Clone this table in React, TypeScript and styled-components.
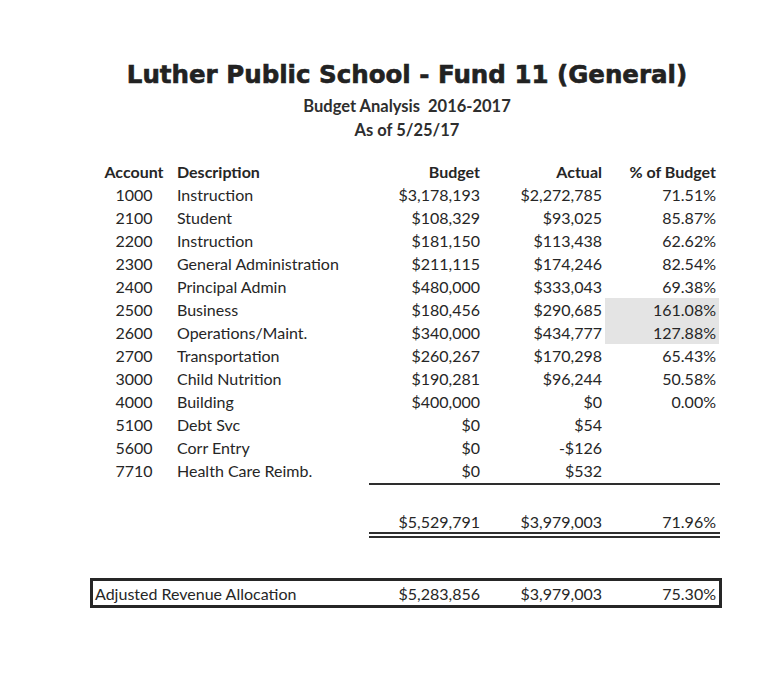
import React from 'react'
import styled, { createGlobalStyle } from 'styled-components'

const GlobalStyle = createGlobalStyle`
  html, body {
    margin: 0;
    padding: 0;
    background: #ffffff;
  }
  body {
    font-family: Lato, 'Open Sans', sans-serif;
    color: #262626;
  }
`

const Page = styled.div`
  width: 780px;
  height: 690px;
  padding-top: 61px;
  box-sizing: border-box;
  background: #fff;
`

const Heading = styled.div`
  margin-left: 34px;
  width: 746px;
  text-align: center;
`

const Title = styled.h1`
  margin: 0;
  font-family: 'DejaVu Sans', 'Liberation Sans', sans-serif;
  font-weight: 700;
  font-size: 24.5px;
  line-height: 28px;
  color: #222;
  -webkit-text-stroke: 0.6px #222;
`

const SubTitle = styled.div<{ first?: boolean }>`
  margin-top: ${({ first }) => (first ? '5px' : '0')};
  font-weight: 700;
  font-size: 16.5px;
  line-height: 24px;
  color: #2e2e2e;
  white-space: pre;
`

const Table = styled.div`
  margin-top: 18px;
  margin-left: 100px;
  width: 620px;
`

const Row = styled.div<{ head?: boolean }>`
  display: grid;
  grid-template-columns: 68px 203px 112px 122px 114px;
  height: 23px;
  align-items: stretch;
  font-size: 16px;
  font-weight: ${({ head }) => (head ? 700 : 400)};
`

const Cell = styled.div<{ align?: 'left' | 'center' | 'right'; shaded?: boolean }>`
  display: flex;
  align-items: center;
  justify-content: ${({ align }) =>
    align === 'center' ? 'center' : align === 'right' ? 'flex-end' : 'flex-start'};
  padding: ${({ align }) => (align === 'right' ? '0 3px 0 0' : align === 'left' ? '0 0 0 9px' : '0')};
  background: ${({ shaded }) => (shaded ? '#e4e4e4' : 'transparent')};
  white-space: nowrap;
`

const Rule = styled.div`
  margin-left: 269px;
  width: 351px;
  height: 2px;
  margin-top: 1px;
  background: #2e2e2e;
`

const TotalRow = styled(Row)`
  height: 21px;
  margin-top: 26px;
`

const DoubleRule = styled.div`
  margin-left: 269px;
  width: 351px;
  border-top: 6px double #2e2e2e;
`

const AdjustedBox = styled.div`
  margin-top: 40px;
  margin-left: 90px;
  width: 632px;
  height: 30px;
  box-sizing: border-box;
  border: 3px solid #262626;
  display: grid;
  grid-template-columns: 278px 112px 122px 114px;
  font-size: 16px;
`

const BoxLabel = styled.div`
  display: flex;
  align-items: center;
  padding-left: 2px;
  white-space: nowrap;
`

type Line = {
  acct: string
  desc: string
  budget: string
  actual: string
  pct: string
  over?: boolean
}

const lines: Line[] = [
  { acct: '1000', desc: 'Instruction', budget: '$3,178,193', actual: '$2,272,785', pct: '71.51%' },
  { acct: '2100', desc: 'Student', budget: '$108,329', actual: '$93,025', pct: '85.87%' },
  { acct: '2200', desc: 'Instruction', budget: '$181,150', actual: '$113,438', pct: '62.62%' },
  { acct: '2300', desc: 'General Administration', budget: '$211,115', actual: '$174,246', pct: '82.54%' },
  { acct: '2400', desc: 'Principal Admin', budget: '$480,000', actual: '$333,043', pct: '69.38%' },
  { acct: '2500', desc: 'Business', budget: '$180,456', actual: '$290,685', pct: '161.08%', over: true },
  { acct: '2600', desc: 'Operations/Maint.', budget: '$340,000', actual: '$434,777', pct: '127.88%', over: true },
  { acct: '2700', desc: 'Transportation', budget: '$260,267', actual: '$170,298', pct: '65.43%' },
  { acct: '3000', desc: 'Child Nutrition', budget: '$190,281', actual: '$96,244', pct: '50.58%' },
  { acct: '4000', desc: 'Building', budget: '$400,000', actual: '$0', pct: '0.00%' },
  { acct: '5100', desc: 'Debt Svc', budget: '$0', actual: '$54', pct: '' },
  { acct: '5600', desc: 'Corr Entry', budget: '$0', actual: '-$126', pct: '' },
  { acct: '7710', desc: 'Health Care Reimb.', budget: '$0', actual: '$532', pct: '' },
]

export default function App() {
  return (
    <Page>
      <GlobalStyle />
      <Heading>
        <Title>Luther Public School - Fund 11 (General)</Title>
        <SubTitle first>{'Budget Analysis  2016-2017'}</SubTitle>
        <SubTitle>As of 5/25/17</SubTitle>
      </Heading>

      <Table>
        <Row head>
          <Cell align="center">Account</Cell>
          <Cell align="left">Description</Cell>
          <Cell align="right">Budget</Cell>
          <Cell align="right">Actual</Cell>
          <Cell align="right">% of Budget</Cell>
        </Row>
        {lines.map((l) => (
          <Row key={l.acct}>
            <Cell align="center">{l.acct}</Cell>
            <Cell align="left">{l.desc}</Cell>
            <Cell align="right">{l.budget}</Cell>
            <Cell align="right">{l.actual}</Cell>
            <Cell align="right" shaded={l.over}>
              {l.pct}
            </Cell>
          </Row>
        ))}
        <Rule />
        <TotalRow>
          <Cell />
          <Cell />
          <Cell align="right">$5,529,791</Cell>
          <Cell align="right">$3,979,003</Cell>
          <Cell align="right">71.96%</Cell>
        </TotalRow>
        <DoubleRule />
      </Table>

      <AdjustedBox>
        <BoxLabel>Adjusted Revenue Allocation</BoxLabel>
        <Cell align="right">$5,283,856</Cell>
        <Cell align="right">$3,979,003</Cell>
        <Cell align="right">75.30%</Cell>
      </AdjustedBox>
    </Page>
  )
}
